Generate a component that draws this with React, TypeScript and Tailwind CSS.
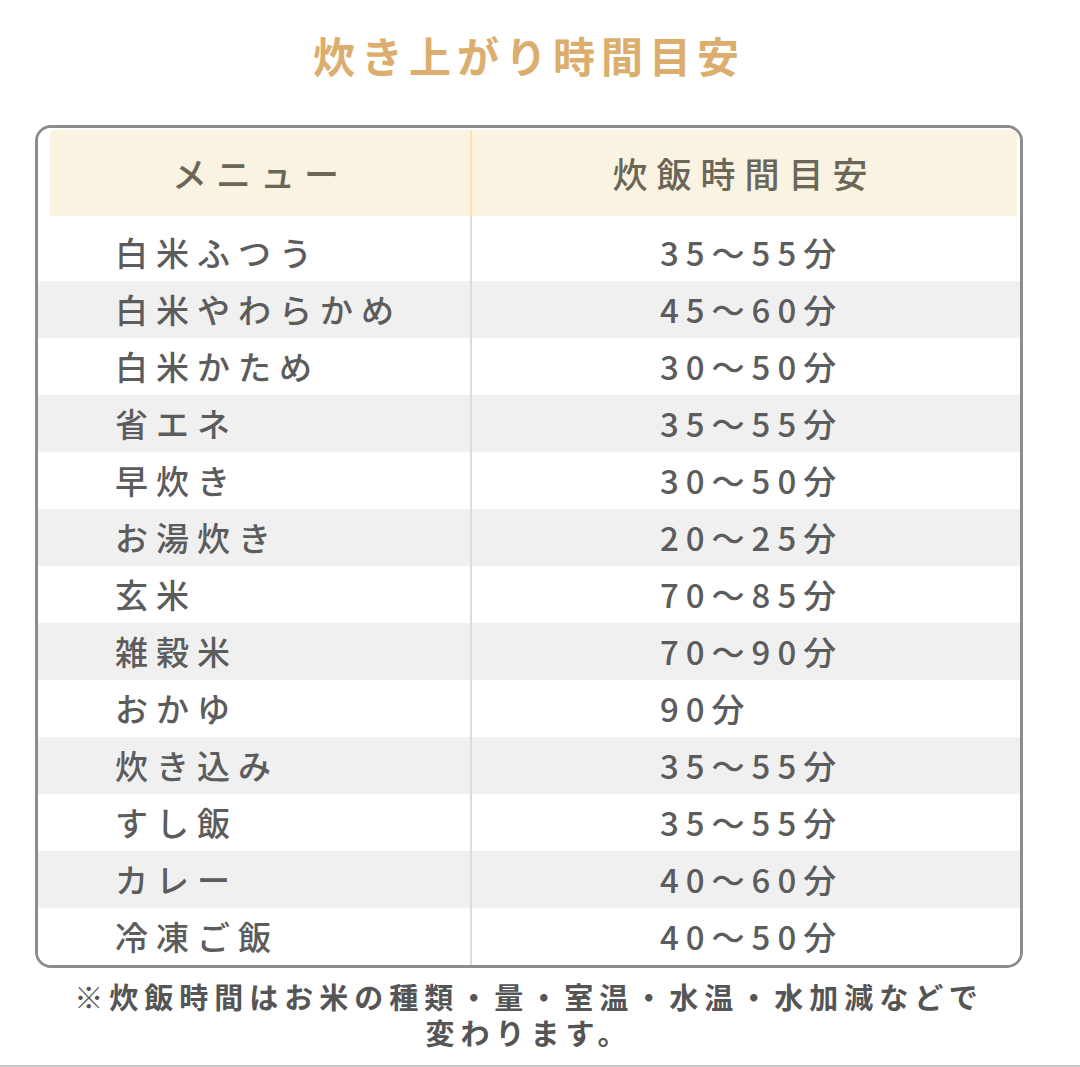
import React from 'react';

const rows: [string, string][] = [
  ['白米ふつう', '35～55分'],
  ['白米やわらかめ', '45～60分'],
  ['白米かため', '30～50分'],
  ['省エネ', '35～55分'],
  ['早炊き', '30～50分'],
  ['お湯炊き', '20～25分'],
  ['玄米', '70～85分'],
  ['雑穀米', '70～90分'],
  ['おかゆ', '90分'],
  ['炊き込み', '35～55分'],
  ['すし飯', '35～55分'],
  ['カレー', '40～60分'],
  ['冷凍ご飯', '40～50分'],
];

const font = { fontFamily: '"Noto Sans CJK JP", "Noto Sans", sans-serif' };

export default function App() {
  return (
    <div className="w-[1080px] h-[1067px] bg-white border-b-2 border-[#c8c8c8] overflow-hidden" style={font}>
      <div className="ml-[35px] w-[988px] flex flex-col items-center">
        <h1 className="mt-[25px] h-[60px] text-[42px] leading-[60px] font-bold tracking-[6px] text-[#dcae6e]">
          炊き上がり時間目安
        </h1>

        <div className="mt-[40px] w-full border-[3px] border-[#8c8c8c] rounded-[16px] overflow-hidden">
          <div className="pt-[2px] pl-[12px] pr-[3px] bg-white">
            <div className="grid grid-cols-[420px_2px_1fr] h-[86px] bg-[#faf3e1] text-[#6a6658] text-[35px] font-medium tracking-[9px]">
              <div className="flex items-center justify-center">メニュー</div>
              <div className="bg-[#fbe6a6]" />
              <div className="flex items-center justify-center">炊飯時間目安</div>
            </div>
          </div>
          <div className="grid grid-cols-[432px_2px_1fr] h-[8px]">
            <div />
            <div className="bg-[#dcdcdc]" />
            <div />
          </div>
          {rows.map(([menu, time], i) => (
            <div
              key={menu}
              className={`grid grid-cols-[432px_2px_1fr] h-[57px] text-[33px] font-medium tracking-[8px] text-[#5c5c5c] ${
                i % 2 === 1 ? 'bg-[#f0f0f0]' : 'bg-white'
              }`}
            >
              <div className="flex items-center pl-[77px]">{menu}</div>
              <div className="bg-[#dcdcdc]" />
              <div className="flex items-center pl-[188px] tracking-[7px]">{time}</div>
            </div>
          ))}
        </div>

        <p className="mt-[10px] text-center text-[29px] leading-[36px] font-bold tracking-[6px] text-[#555555]">
          ※炊飯時間はお米の種類・量・室温・水温・水加減などで
          <br />
          変わります。
        </p>
      </div>
    </div>
  );
}
